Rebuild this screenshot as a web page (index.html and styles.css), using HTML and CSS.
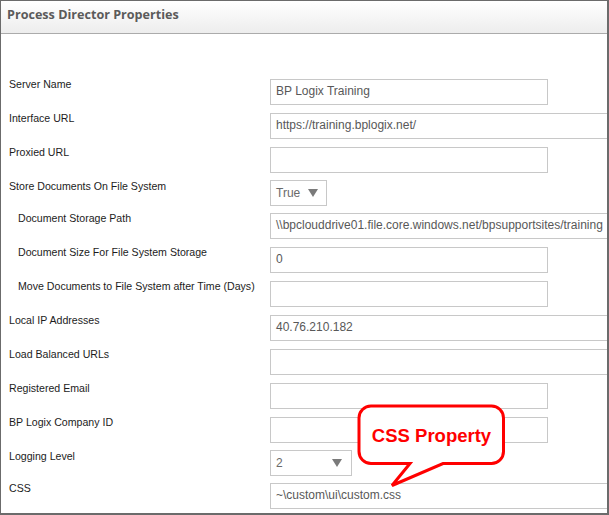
FILE: index.html
```html
<!DOCTYPE html>
<html>
<head>
<meta charset="utf-8">
<link rel="stylesheet" href="styles.css">
</head>
<body>
<div class="panel">
  <div class="header"><span class="title">Process Director Properties</span></div>
  <div class="form">
    <div class="row"><div class="label">Server Name</div><div class="field short">BP Logix Training</div></div>
    <div class="row"><div class="label">Interface URL</div><div class="field wide">https://training.bplogix.net/</div></div>
    <div class="row"><div class="label">Proxied URL</div><div class="field short"></div></div>
    <div class="row"><div class="label">Store Documents On File System</div><div class="select sel-true"><span>True</span><svg class="arrow" width="10" height="8" viewBox="0 0 10 8"><path d="M0 0H10L5 8Z"/></svg></div></div>
    <div class="row"><div class="label sub">Document Storage Path</div><div class="field wide">\\bpclouddrive01.file.core.windows.net/bpsupportsites/training</div></div>
    <div class="row"><div class="label sub">Document Size For File System Storage</div><div class="field short">0</div></div>
    <div class="row"><div class="label sub">Move Documents to File System after Time (Days)</div><div class="field short"></div></div>
    <div class="row"><div class="label">Local IP Addresses</div><div class="field wide">40.76.210.182</div></div>
    <div class="row"><div class="label">Load Balanced URLs</div><div class="field wide"></div></div>
    <div class="row"><div class="label">Registered Email</div><div class="field short"></div></div>
    <div class="row"><div class="label">BP Logix Company ID</div><div class="field short"></div></div>
    <div class="row"><div class="label">Logging Level</div><div class="select sel-level"><span>2</span><svg class="arrow" width="10" height="8" viewBox="0 0 10 8"><path d="M0 0H10L5 8Z"/></svg></div></div>
    <div class="row"><div class="label">CSS</div><div class="field wide">~\custom\ui\custom.css</div></div>
  </div>
  <div class="callout">
    <svg class="bubble" width="162" height="95" viewBox="0 0 162 95">
      <path d="M21 8H141.5A12 12 0 0 1 153.5 20V53.5A12 12 0 0 1 141.5 65.5H93L42 87.5L60 65.5H21A12 12 0 0 1 9 53.5V20A12 12 0 0 1 21 8Z" fill="#fff" stroke="#ff0000" stroke-width="3" stroke-linejoin="miter"/>
    </svg>
    <span class="callout-text">CSS Property</span>
  </div>
</div>
</body>
</html>
```
FILE: styles.css
```css
html, body {
  margin: 0;
  padding: 0;
  background: #fff;
}
.panel {
  position: relative;
  width: 609px;
  height: 515px;
  box-sizing: border-box;
  border-style: solid;
  border-color: #6b6b6b;
  border-width: 1px 2px 2px 1px;
  overflow: hidden;
  background: #fff;
}
.header {
  height: 33px;
  box-sizing: border-box;
  border-bottom: 1px solid #ababab;
  background: linear-gradient(#ffffff, #ededed);
  padding: 4px 0 0 6px;
}
.title {
  font-family: "Open Sans", "DejaVu Sans", sans-serif;
  font-weight: 700;
  font-size: 12.6px;
  line-height: 20px;
  color: #5b5b5b;
}
.form {
  display: flex;
  flex-direction: column;
  gap: 8px;
  padding-top: 45px;
}
.row {
  display: flex;
  align-items: flex-start;
}
.label {
  width: 269px;
  box-sizing: border-box;
  padding-left: 8px;
  flex: none;
  font-family: "Liberation Sans", Arial, sans-serif;
  font-size: 10.6px;
  line-height: 11px;
  color: #1c1c1c;
  white-space: nowrap;
}
.label.sub {
  padding-left: 17px;
}
.field {
  height: 26px;
  box-sizing: border-box;
  border: 1px solid #c8c8c8;
  padding: 0 5px;
  font-family: "Liberation Sans", Arial, sans-serif;
  font-size: 12px;
  line-height: 22px;
  color: #585858;
  white-space: nowrap;
  overflow: hidden;
  flex: none;
}
.field.short {
  width: 278px;
}
.field.wide {
  width: 345px;
}
.select {
  height: 26px;
  box-sizing: border-box;
  border: 1px solid #c8c8c8;
  margin: -1px 0 -1px 0;
  padding: 0 8px 0 5px;
  display: flex;
  align-items: center;
  justify-content: space-between;
  font-family: "Liberation Sans", Arial, sans-serif;
  font-size: 12px;
  color: #6a6a6a;
  flex: none;
}
.sel-true {
  width: 57px;
}
.sel-level {
  width: 82px;
  padding-right: 9px;
}
.arrow {
  display: block;
  fill: #7a7a7a;
}
.callout {
  position: absolute;
  left: 349px;
  top: 397px;
  width: 162px;
  height: 95px;
}
.bubble {
  display: block;
}
.callout-text {
  position: absolute;
  left: 9px;
  top: 28px;
  width: 145px;
  text-align: center;
  font-family: "Liberation Sans", Arial, sans-serif;
  font-weight: 700;
  font-size: 18.5px;
  line-height: 20px;
  color: #ff0000;
  white-space: nowrap;
}
```
